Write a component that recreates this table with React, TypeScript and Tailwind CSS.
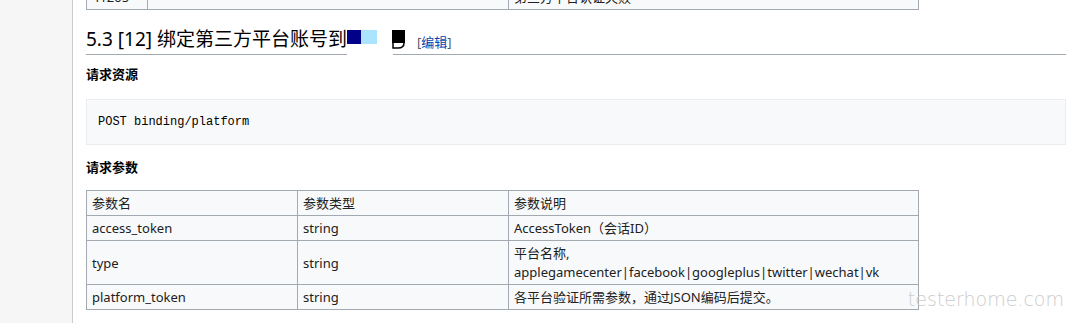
import { FC } from 'react';

interface ParamRow {
  name: string;
  type: string;
  desc: string[];
}

const params: ParamRow[] = [
  { name: 'access_token', type: 'string', desc: ['AccessToken（会话ID）'] },
  { name: 'type', type: 'string', desc: ['平台名称,', 'applegamecenter|facebook|googleplus|twitter|wechat|vk'] },
  { name: 'platform_token', type: 'string', desc: ['各平台验证所需参数，通过JSON编码后提交。'] },
];

const font = { fontFamily: '"Noto Sans", "Noto Sans CJK SC", sans-serif' };

const cell = 'border border-[#a2a9b1] px-[5px] pt-[3px] pb-[2px] align-middle';

// broken image artefacts that sit over the heading
const Glitch: FC = () => (
  <svg width="60" height="31" viewBox="0 0 60 31" className="absolute left-0 top-0 overflow-visible">
    <rect x="0" y="4" width="14" height="14" fill="#000088" />
    <rect x="14" y="4" width="16" height="14" fill="#aae4ff" />
    <rect x="0" y="18" width="46" height="13" fill="#ffffff" />
    <rect x="45" y="4" width="13" height="13" fill="#000000" />
    <path d="M46 17 V22 H51 Q57 22 57 17" fill="none" stroke="#000000" strokeWidth="1.5" />
  </svg>
);

const App: FC = () => {
  return (
    <div className="flex h-[323px] w-[1066px] overflow-hidden bg-white text-[#202122]" style={font}>
      <div className="w-[73px] shrink-0 border-r border-[#c8ccd1] bg-[#f6f6f6]" />
      <div className="relative flex-1 pl-[13px]">
        <table className="-mt-[16px] w-[833px] border-collapse bg-[#f8f9fa] text-[13px] leading-[19px]">
          <tbody>
            <tr>
              <td className={`${cell} w-[61px]`}>41205</td>
              <td className={`${cell} w-[361px]`}></td>
              <td className={cell}>第三方平台认证失败</td>
            </tr>
          </tbody>
        </table>

        <div className="mt-[16px] flex items-end border-b border-[#a2a9b1] pb-[1px]">
          <span className="text-[19px] leading-[27px] text-black">5.3 [12] 绑定第三方平台账号到</span>
          <span className="relative z-10 inline-block h-[27px] w-[58px]">
            <Glitch />
          </span>
          <span className="mb-[1px] ml-[12px] text-[13px] leading-[20px] text-[#54595d]">
            [<span className="text-[#0645ad]">编辑</span>]
          </span>
        </div>

        <div className="mt-[10px] text-[13px] font-bold leading-[18px] text-black">请求资源</div>

        <div className="mt-[16px] flex h-[46px] items-center border border-[#eaecf0] bg-[#f8f9fa] pl-[11px]">
          <span className="text-[12px] text-black" style={{ fontFamily: '"Liberation Mono", monospace' }}>
            POST binding/platform
          </span>
        </div>

        <div className="mt-[13px] text-[13px] font-bold leading-[18px] text-black">请求参数</div>

        <table className="mt-[14px] w-[833px] border-collapse bg-[#f8f9fa] text-[13px] leading-[19px]">
          <tbody>
            <tr>
              <td className={`${cell} w-[211px]`}>参数名</td>
              <td className={`${cell} w-[211px]`}>参数类型</td>
              <td className={cell}>参数说明</td>
            </tr>
            {params.map((p) => (
              <tr key={p.name}>
                <td className={cell}>{p.name}</td>
                <td className={cell}>{p.type}</td>
                <td className={cell}>
                  {p.desc.map((line) => (
                    <div key={line}>{line}</div>
                  ))}
                </td>
              </tr>
            ))}
          </tbody>
        </table>

        <div
          className="absolute right-[2px] top-[285px] text-[19px] font-extralight text-[#cccccc]"
          style={{ fontFamily: '"DejaVu Sans", sans-serif' }}
        >
          testerhome.com
        </div>
      </div>
    </div>
  );
};

export default App;
